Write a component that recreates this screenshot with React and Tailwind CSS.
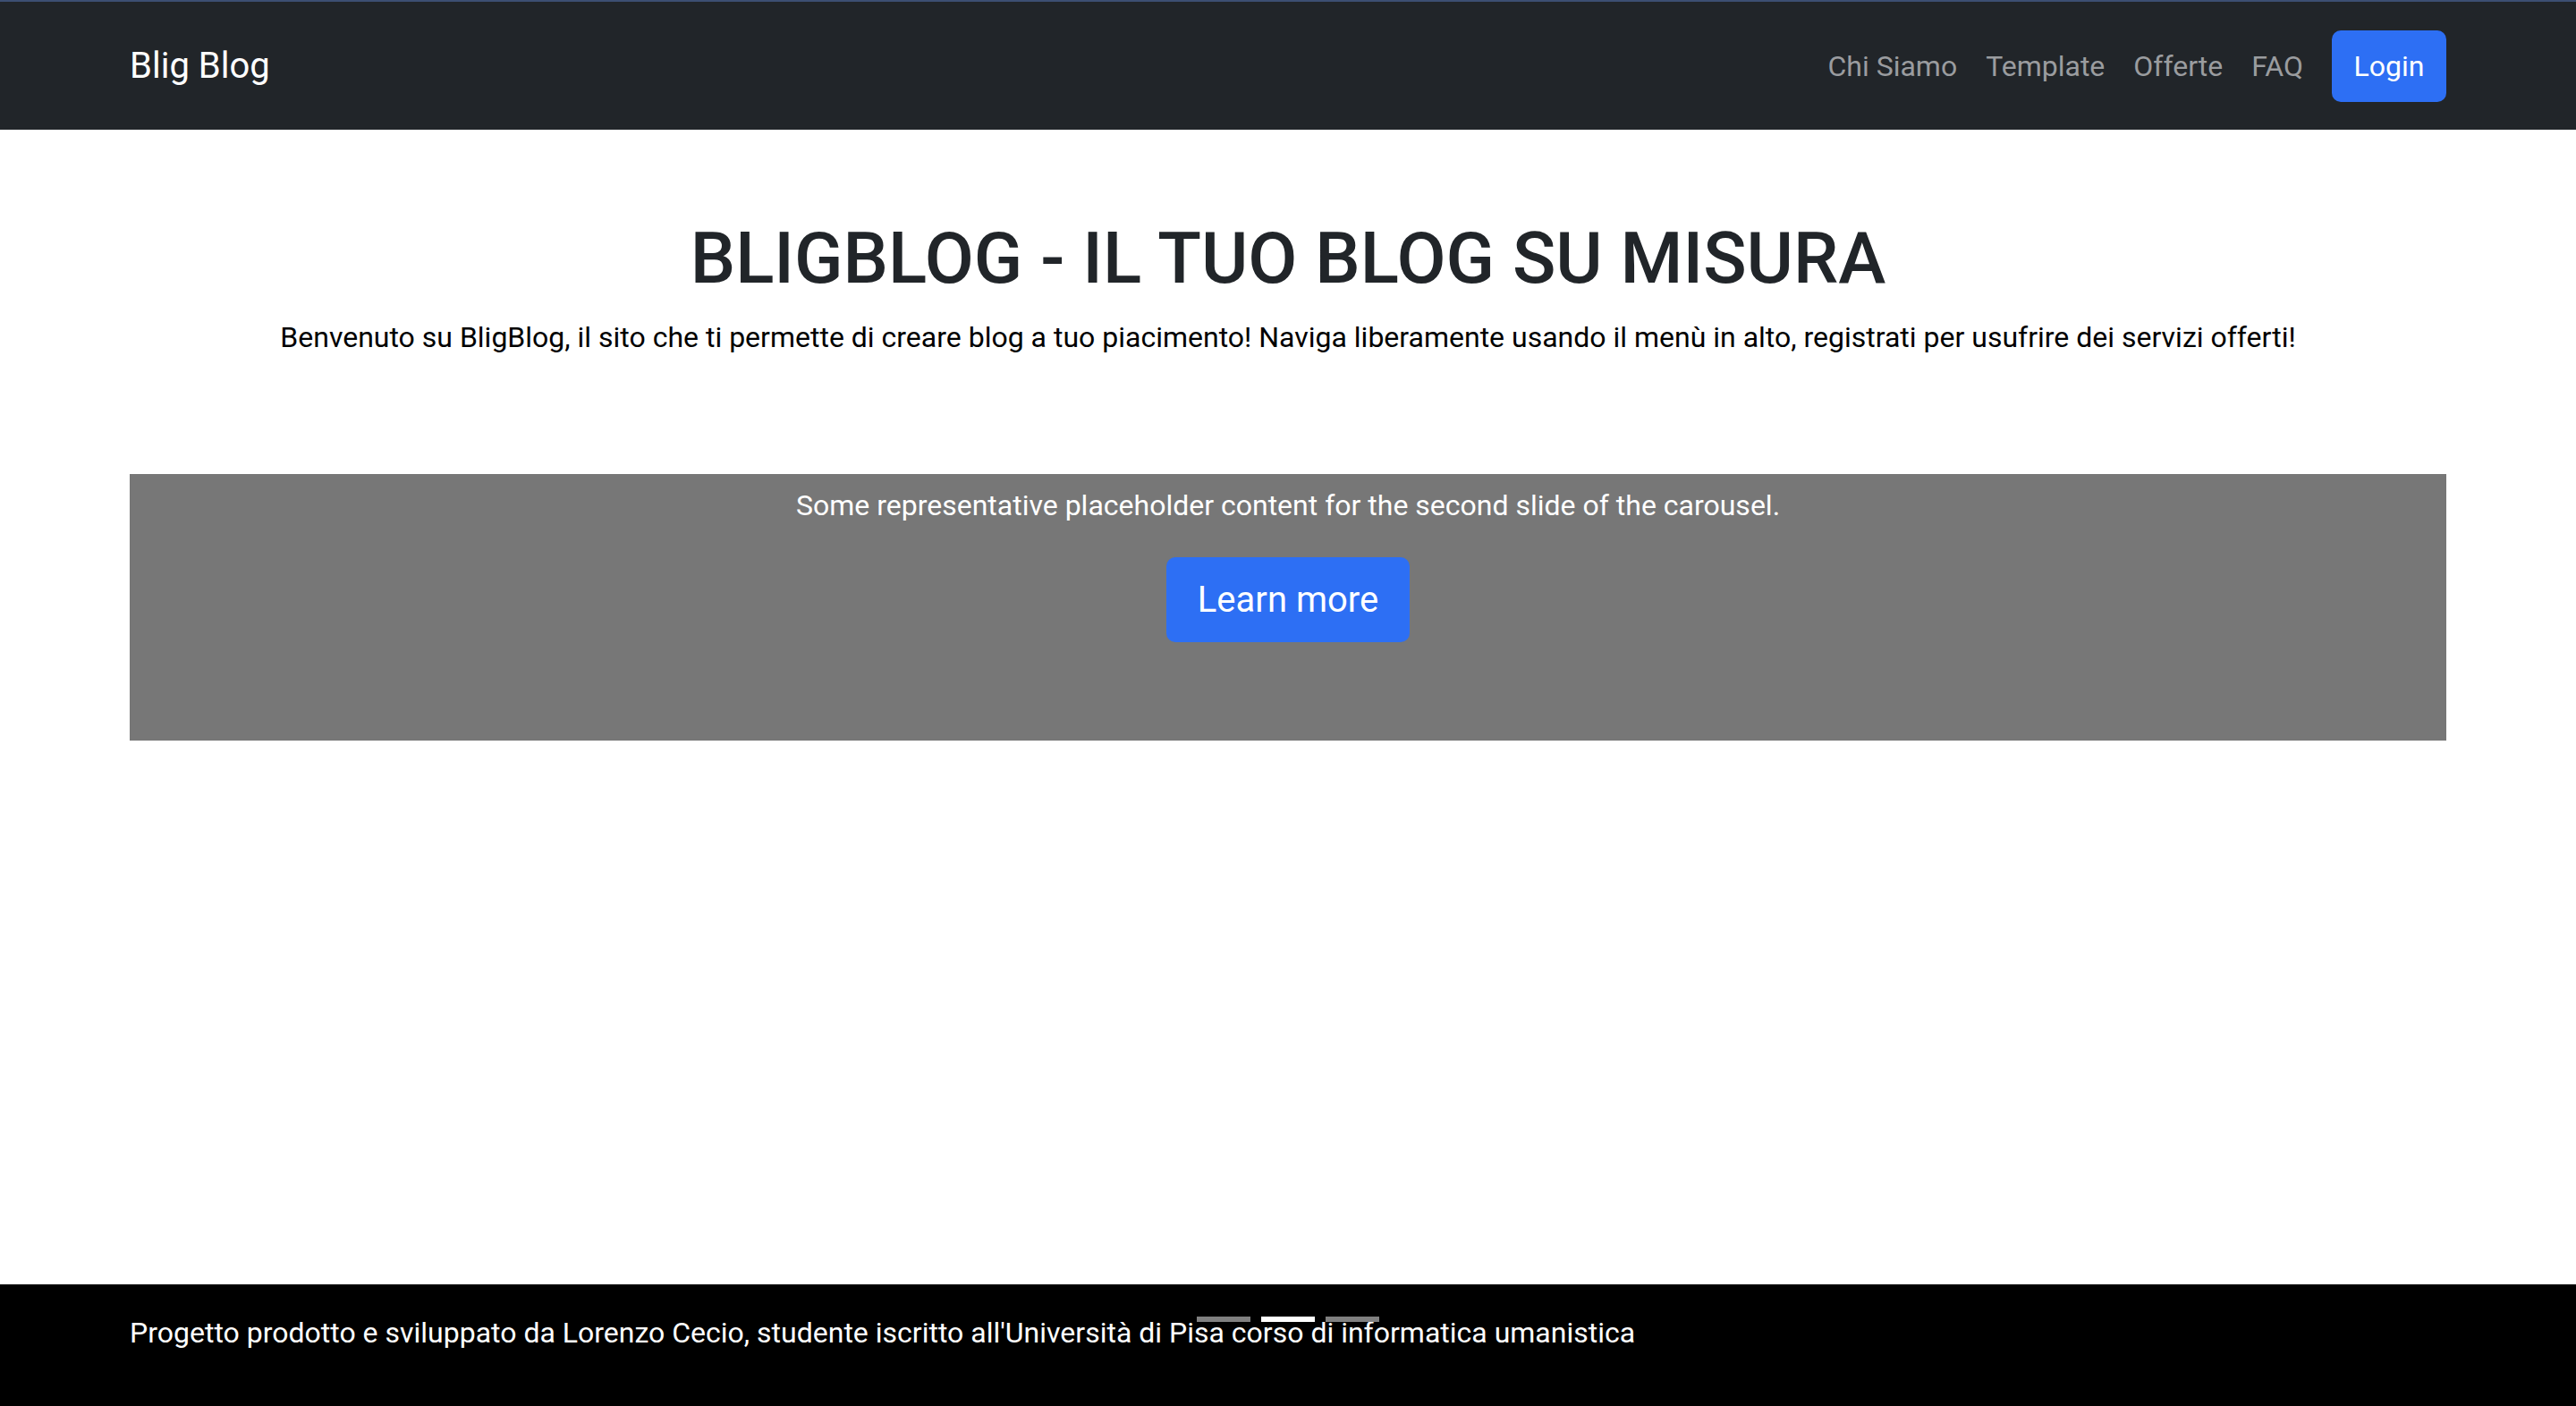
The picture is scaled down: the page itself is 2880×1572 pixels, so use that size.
export default function App() {
  const links = ["Chi Siamo", "Template", "Offerte", "FAQ"];

  return (
    <div className="min-h-screen flex flex-col bg-white font-['Roboto',sans-serif] text-[#212529]">
      <nav className="h-[145px] border-t-2 border-[#3c4f72] bg-[#212529]">
        <div className="h-full px-[145px] flex items-center justify-between">
          <a className="text-[40px] leading-[60px] text-white">Blig Blog</a>
          <div className="flex items-center gap-[32px]">
            {links.map((l) => (
              <a key={l} className="text-[32px] leading-[48px] text-[#9a9c9f]">
                {l}
              </a>
            ))}
            <button className="h-[80px] w-[128px] rounded-[10px] bg-[#2d6ff4] text-[32px] leading-[48px] text-white">
              Login
            </button>
          </div>
        </div>
      </nav>

      <main className="px-[145px] pt-[96px]">
        <h1 className="text-center text-[80px] leading-[96px] font-medium">
          BLIGBLOG - IL TUO BLOG SU MISURA
        </h1>
        <p className="mt-[16px] text-center text-[32px] leading-[48px] text-black">
          Benvenuto su BligBlog, il sito che ti permette di creare blog a tuo piacimento! Naviga liberamente usando il menù in alto, registrati per usufrire dei servizi offerti!
        </p>

        <div className="mt-[129px] h-[298px] bg-[#777777] pt-[11px] flex flex-col items-center">
          <p className="text-[32px] leading-[48px] text-white">
            Some representative placeholder content for the second slide of the carousel.
          </p>
          <button className="mt-[34px] h-[95px] w-[272px] rounded-[10px] bg-[#2d6ff4] text-[40px] leading-[60px] text-white">
            Learn more
          </button>
        </div>
      </main>

      <footer className="relative mt-auto h-[136px] bg-black px-[145px] pt-[30px]">
        <p className="text-[32px] leading-[48px] text-white">
          Progetto prodotto e sviluppato da Lorenzo Cecio, studente iscritto all'Università di Pisa corso di informatica umanistica
        </p>
        {/* carousel indicators end up over the footer */}
        <div className="absolute left-1/2 top-[36px] -translate-x-1/2 flex gap-[12px]">
          <span className="block h-[6px] w-[60px] bg-[#808080]" />
          <span className="block h-[6px] w-[60px] bg-white" />
          <span className="block h-[6px] w-[60px] bg-[#808080]" />
        </div>
      </footer>
    </div>
  );
}
